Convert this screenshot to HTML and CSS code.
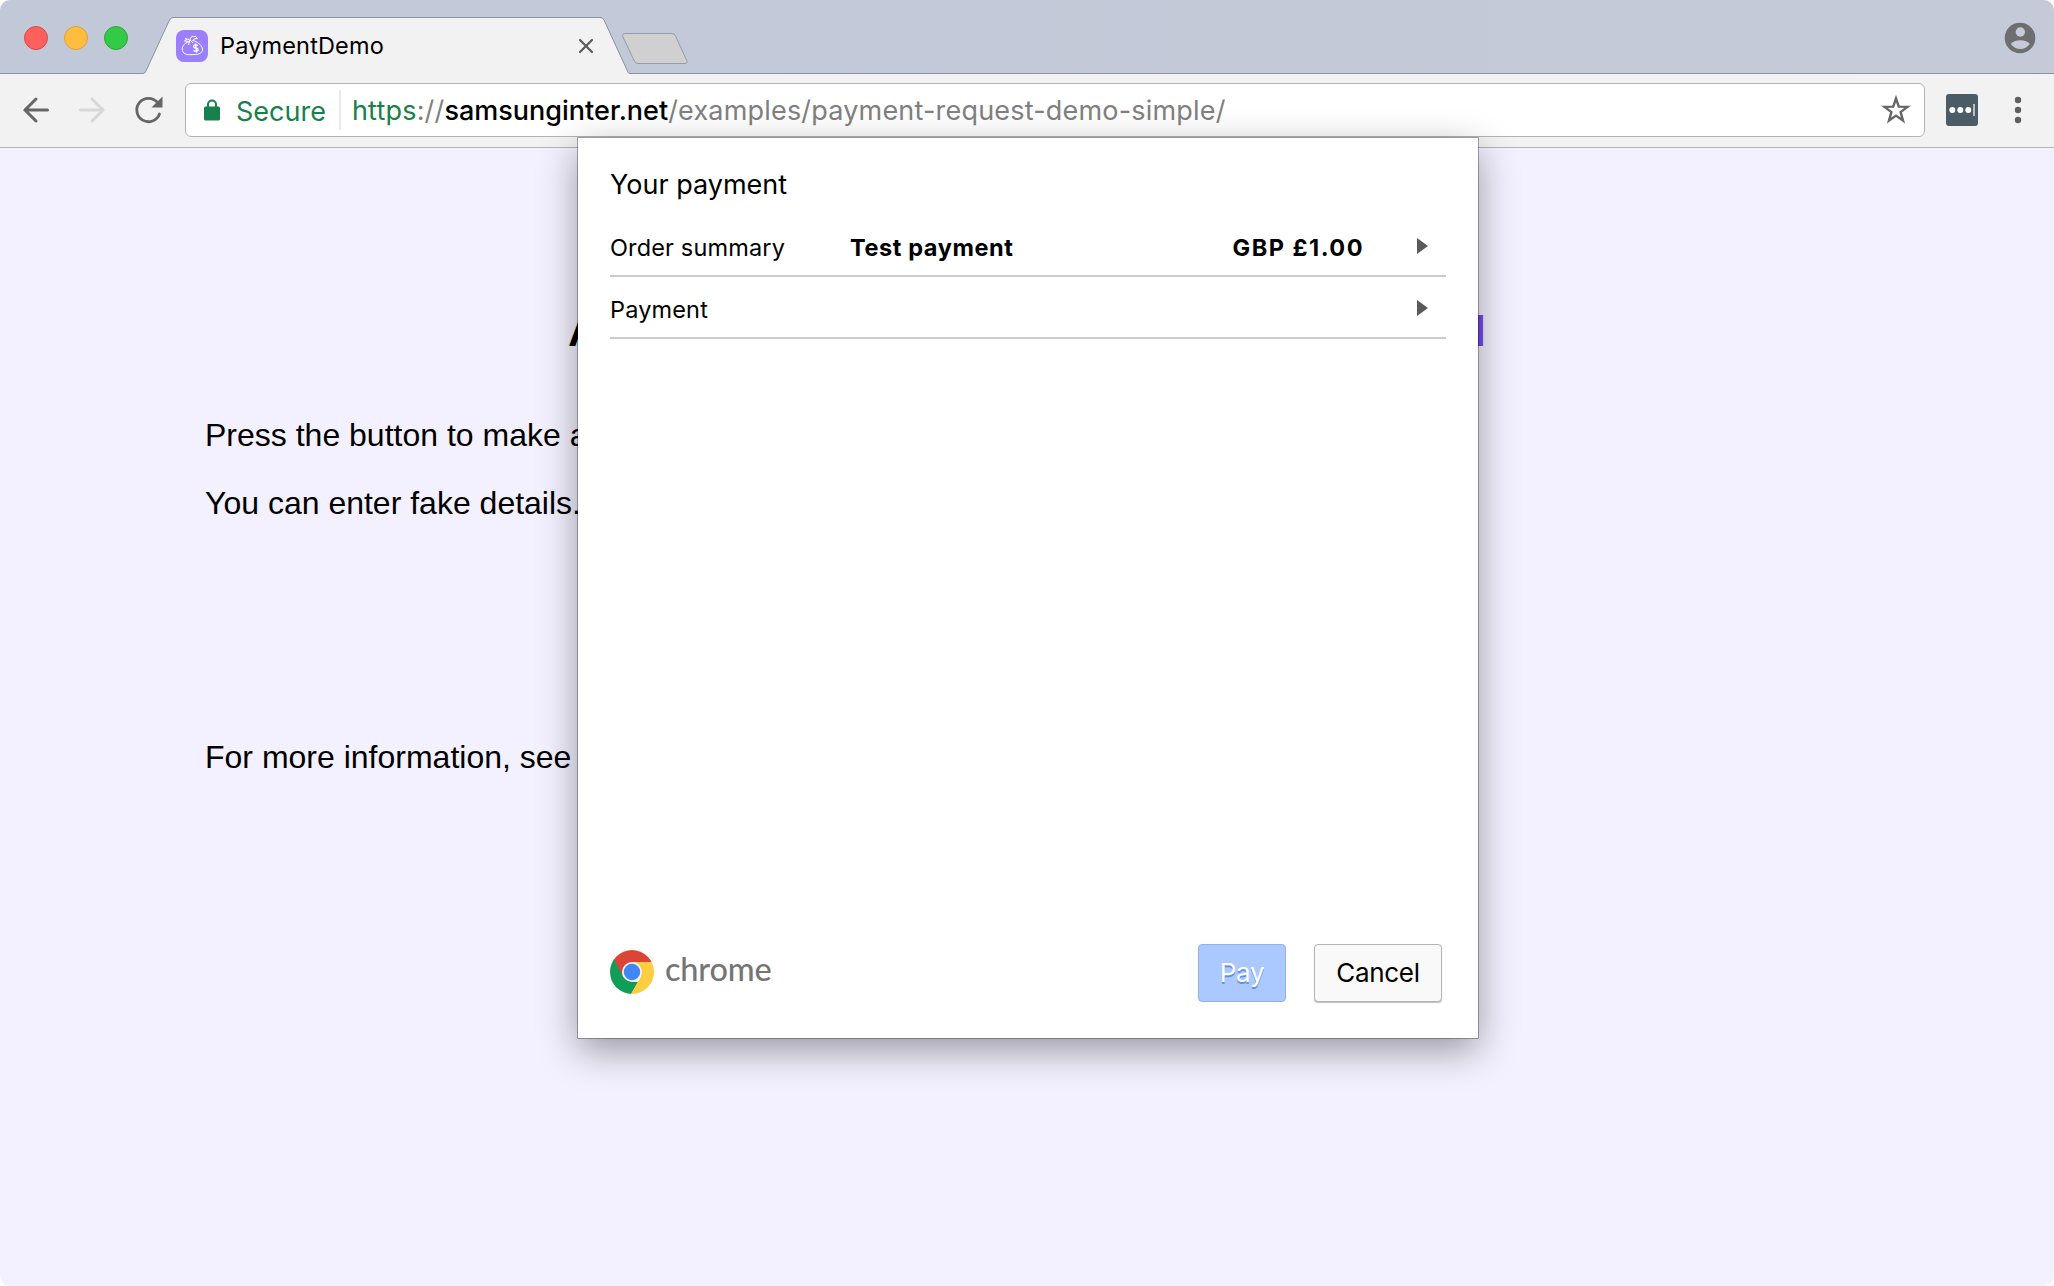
FILE: index.html
```html
<!DOCTYPE html>
<html lang="en">
<head>
<meta charset="utf-8">
<title>PaymentDemo</title>
<link rel="stylesheet" href="styles.css">
</head>
<body>
<div class="window">
  <header class="tabstrip">
    <div class="lights"><i class="light red"></i><i class="light amber"></i><i class="light green"></i></div>
    <div class="tab">
      <svg class="tab-shape" width="486" height="57" viewBox="0 0 486 57"><path d="M0 57V56.500Q2 56.500 3 54L26 4Q27.500 .5 30 .5H457Q460 .5 461 3L484 53Q485.500 56.500 486 56.500V57Z" fill="#f2f2f2"/><path d="M0 56.500Q2 56.500 3 54L26 4Q27.500 .5 30 .5H457Q460 .5 461 3L484 53Q485.500 56.500 486 56.500" fill="none" stroke="#8b919d"/></svg>
      <svg class="favicon" width="32" height="32" viewBox="0 0 32 32"><rect width="32" height="32" rx="8" fill="#9a80ff"/><g fill="none" stroke="#fff" stroke-width="1"><path d="M13.500 11.500C8 13 5.500 17 6.500 20.500C7.500 25 13 25 18 24.500C23 24.500 27 23 26.500 19C26 15 21 11.500 16.500 10.500"/><path d="M13.500 11.500L8.500 11L10.500 9.500L9 8.500L13 9.500M14 9.500L12.500 15M14 10Q14.500 6 17.500 6.500Q20 5.500 21.500 8.500Q19 8 16.500 10.500M14 10L17 13"/><path d="M22 15.500Q18 14 17.500 16.500Q18 18 20 18Q22.500 18.500 22 20.500Q20 22 17.500 20.500M19.500 13.500L20.500 22.500" stroke-width="1.300"/></g></svg>
      <span class="tab-title">PaymentDemo</span>
      <svg class="tab-close" width="16" height="16" viewBox="0 0 16 16"><path d="M2 2L14 14M14 2L2 14" stroke="#5a5a5a" stroke-width="2.200" stroke-linecap="round"/></svg>
    </div>
    <svg class="newtab" width="68" height="34" viewBox="0 0 68 34"><path d="M4 1.500H51Q53.500 1.500 54.500 4L65.500 28Q67 31.500 64 31.500H17Q14.500 31.500 13.300 29L2 5Q.8 1.500 4 1.500Z" fill="#d0d0d0" stroke="#979ba5"/></svg>
    <svg class="profile" width="32" height="32" viewBox="0 0 32 32"><circle cx="16" cy="16" r="15.300" fill="#6e6e6e"/><circle cx="16.300" cy="10" r="4.700" fill="#c4cad8"/><path d="M6.800 22Q9.500 18.200 16.300 18.200Q23 18.200 25.800 22Q22 27 16.300 27Q10.500 27 6.800 22Z" fill="#c4cad8"/></svg>
  </header>
  <nav class="toolbar">
    <svg class="back" width="28" height="28" viewBox="0 0 28 28"><path d="M14 3L3 14L14 25M3 14H25.500" fill="none" stroke="#666" stroke-width="3" stroke-linecap="round" stroke-linejoin="miter"/></svg>
    <svg class="forward" width="28" height="28" viewBox="0 0 28 28"><path d="M14 3L25 14L14 25M25 14H2.500" fill="none" stroke="#d7d7d7" stroke-width="3" stroke-linecap="round"/></svg>
    <svg class="reload" width="30" height="30" viewBox="0 0 30 30"><path d="M25.500 19A11.700 11.700 0 1 1 23.500 7.500" fill="none" stroke="#666" stroke-width="2.800" stroke-linecap="round"/><path d="M28.500 1.500V12.500H17.500Z" fill="#666"/></svg>
    <div class="omnibox">
      <svg class="lock" width="16" height="22" viewBox="0 0 16 22"><path d="M4 8V5.500A4 4 0 0 1 12 5.500V8" fill="none" stroke="#18804a" stroke-width="2"/><rect y="7.500" width="16" height="14" rx="1.500" fill="#18804a"/></svg>
      <span class="secure">Secure</span>
      <span class="url"><span class="scheme">https</span>://<span class="host">samsunginter.net</span>/examples/payment-request-demo-simple/</span>
      <svg class="star" width="30" height="30" viewBox="0 0 30 30"><path d="M15 3.500L17.800 11.600L26.500 11.900L19.600 17.100L22 25.500L15 20.600L8 25.500L10.400 17.100L3.500 11.900L12.200 11.600Z" fill="none" stroke="#666" stroke-width="2.400"/></svg>
    </div>
    <svg class="extension" width="32" height="32" viewBox="0 0 32 32"><rect width="32" height="32" rx="3" fill="#4c5c66"/><g fill="#fff"><circle cx="6.300" cy="16" r="3"/><circle cx="14.300" cy="16" r="3"/><circle cx="22.300" cy="16" r="3"/></g><path d="M28 10V22" stroke="#b9c0c4" stroke-width="2"/></svg>
    <svg class="menu" width="8" height="28" viewBox="0 0 8 28"><g fill="#5f5f5f"><circle cx="4" cy="4" r="3.200"/><circle cx="4" cy="14" r="3.200"/><circle cx="4" cy="24" r="3.200"/></g></svg>
  </nav>
  <main class="page">
    <h1 class="heading"><span>A</span><a>l</a></h1>
    <p class="copy">Press the button to make a</p>
    <p class="copy">You can enter fake details.</p>
    <p class="copy more">For more information, see</p>
  </main>
</div>
<section class="dialog">
  <h2 class="dialog-title">Your payment</h2>
  <div class="row">
    <span class="label">Order summary</span>
    <strong class="item">Test payment</strong>
    <strong class="amount">GBP £1.00</strong>
    <svg class="arrow" width="11" height="16" viewBox="0 0 11 16"><path d="M0 0L11 8L0 16Z" fill="#5a5a5a"/></svg>
  </div>
  <div class="row">
    <span class="label">Payment</span>
    <svg class="arrow" width="11" height="16" viewBox="0 0 11 16"><path d="M0 0L11 8L0 16Z" fill="#5a5a5a"/></svg>
  </div>
  <footer class="footer">
    <svg class="logo" width="44" height="44" viewBox="0 0 44 44"><defs><clipPath id="disc"><circle cx="22" cy="22" r="22"/></clipPath></defs><g clip-path="url(#disc)"><path d="M0 0H44V12H22L13.300 27L0 5Z" fill="#db4437"/><path d="M4 9L13.300 27L22 32H28L20 46H-2V9Z" fill="#0f9d58"/><path d="M22 12H46V46H20L30.700 27Z" fill="#ffcd40"/></g><circle cx="22" cy="22" r="10" fill="#f1f1f1"/><circle cx="22" cy="22" r="8.200" fill="#4285f4"/></svg>
    <span class="brand">chrome</span>
    <button class="button pay">Pay</button>
    <button class="button cancel">Cancel</button>
  </footer>
</section>
</body>
</html>
```
FILE: styles.css
```css
* { box-sizing: border-box; }
body { margin: 0; background: #fff; font-family: Inter, "Liberation Sans", sans-serif; color: #000; }
svg { display: block; flex: none; }
h1, h2, p { margin: 0; }
.window { width: 2054px; height: 1286px; border-radius: 10px; overflow: hidden; background: #f3f1ff; }

.tabstrip { display: flex; align-items: flex-start; height: 74px; background: linear-gradient(90deg, #c1c8d7, #c4cad8); border-bottom: 1px solid #8b919d; }
.lights { display: flex; gap: 16px; padding: 26px 0 0 24px; width: 143px; }
.light { width: 24px; height: 24px; border-radius: 50%; border: 1px solid; }
.red { background: #ff605c; border-color: #e2443f; }
.amber { background: #ffbd3f; border-color: #dfa034; }
.green { background: #33ca48; border-color: #22ac34; }
.tab { position: relative; display: flex; align-items: center; width: 486px; height: 57px; margin-top: 17px; padding: 0 35px 0 33px; }
.tab-shape { position: absolute; left: 0; top: 0; }
.favicon, .tab-title, .tab-close { position: relative; }
.tab-title { flex: 1; padding-left: 12px; font-size: 23.5px; letter-spacing: .15px; line-height: 30px; white-space: nowrap; }
.newtab { margin: 32px 0 0 -8px; }
.profile { margin: 22px 18px 0 auto; }

.toolbar { display: flex; align-items: center; height: 74px; padding-bottom: 1px; background: #f2f2f2; border-bottom: 1px solid #b3b3b9; }
.back { margin-left: 22px; }
.forward { margin-left: 28px; }
.reload { margin-left: 28px; }
.omnibox { display: flex; align-items: center; width: 1740px; height: 54px; margin-left: 21px; padding: 0 13px 0 18px; background: #fff; border: 1px solid #b3b3b3; border-radius: 6px; font-size: 27px; white-space: nowrap; }
.lock { margin-top: -1px; }
.secure { margin-left: 16px; padding-top: 2px; color: #18804a; }
.url { margin-left: 13px; padding: 2px 0 0 11px; border-left: 2px solid #e9e9e9; line-height: 38px; letter-spacing: .19px; color: #808080; }
.scheme { color: #18804a; }
.host { color: #000; font-weight: 500; letter-spacing: 0; }
.star { margin-left: auto; }
.extension { margin-left: 21px; }
.menu { margin-left: 36px; }

.page { padding: 141px 205px 0; font-family: "Liberation Sans", Arial, sans-serif; }
.heading { display: flex; justify-content: space-between; width: 918px; margin: 17px 0 61px 363px; font-size: 43px; line-height: 50px; }
.heading a { color: #7a46ee; }
.copy { height: 37px; margin-bottom: 31px; font-size: 32px; line-height: 37px; white-space: nowrap; }
.more { margin-top: 217px; }

.dialog { position: absolute; left: 578px; top: 138px; display: flex; flex-direction: column; width: 900px; height: 900px; padding: 27px 32px 36px; background: #fff; box-shadow: 0 0 0 1px rgba(0, 0, 0, .3), 0 12px 36px rgba(0, 0, 0, .38); }
.dialog-title { height: 50px; font-size: 27px; font-weight: 400; line-height: 40px; }
.row { display: flex; align-items: center; height: 62px; padding: 6px 18px 0 0; border-bottom: 2px solid #ccc; font-size: 23.5px; letter-spacing: .15px; line-height: 30px; white-space: nowrap; }
.label { width: 240px; }
.item { letter-spacing: .6px; }
.amount { margin-left: auto; letter-spacing: 1.5px; }
.arrow { margin: -4px 0 0 auto; }
.amount + .arrow { margin-left: 53px; }
.footer { display: flex; align-items: center; margin-top: auto; padding-right: 4px; }
.logo { margin-top: -2px; }
.brand { margin: -10px 0 0 11px; color: #757575; font-family: Lato, sans-serif; font-size: 32.5px; font-weight: 500; letter-spacing: -.2px; }
.button { height: 58px; padding: 0 0 2px; border-radius: 4px; font-family: inherit; font-size: 26px; letter-spacing: -.3px; }
.pay { width: 88px; margin-left: auto; background: #abc8ff; border: 1px solid #94b1e8; color: #fff; text-shadow: 0 2px 0 #5b91e8; }
.cancel { width: 128px; margin-left: 28px; background: #f9f9f9; border: 1px solid #b4b4b4; box-shadow: 0 1px 1px rgba(0, 0, 0, .25); color: #000; }
```
